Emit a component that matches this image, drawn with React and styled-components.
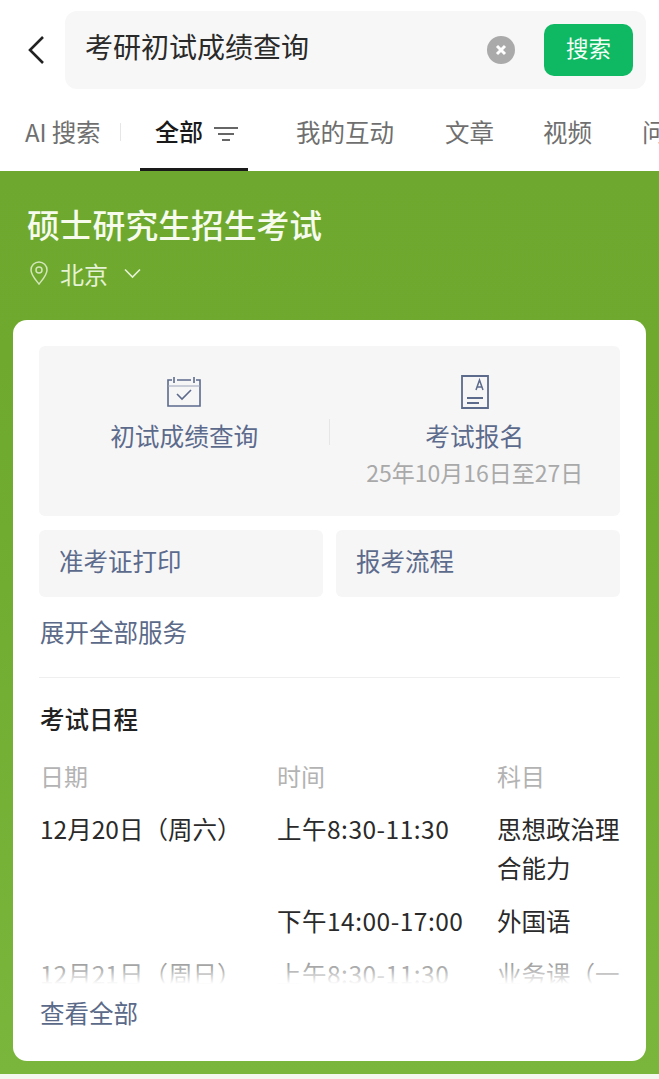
import React from "react";
import styled, { createGlobalStyle } from "styled-components";

const GlobalStyle = createGlobalStyle`
    html, body {
        margin: 0;
        padding: 0;
        background: #eef4ea;
        font-family: "Noto Sans CJK SC", "Noto Sans", sans-serif;
    }
    * {
        box-sizing: border-box;
    }
`

const Page = styled.div`
    width: 659px;
    height: 1079px;
    overflow: hidden;
    background: #f3f7f0;
`

const TopBar = styled.div`
    display: flex;
    align-items: center;
    height: 100px;
    background: #fff;
    padding: 0 13px 0 25px;
`

const BackIcon = styled.svg`
    width: 21px;
    height: 32px;
    margin-right: 19px;
    flex-shrink: 0;
`

const SearchBox = styled.div`
    flex: 1;
    height: 78px;
    border-radius: 12px;
    background: #f7f7f7;
    display: flex;
    align-items: center;
    padding: 0 13px 0 20px;
`

const Query = styled.div`
    flex: 1;
    font-size: 28px;
    color: #2a2a2a;
    padding-bottom: 9px;
`

const ClearIcon = styled.svg`
    width: 28px;
    height: 28px;
    margin-right: 29px;
`

const SearchButton = styled.div`
    width: 89px;
    height: 52px;
    border-radius: 10px;
    background: #0fb963;
    color: #f4fff8;
    font-size: 22.5px;
    padding-bottom: 6px;
    display: flex;
    align-items: center;
    justify-content: center;
`

const Tabs = styled.div`
    display: flex;
    height: 71px;
    background: #fff;
    overflow: hidden;
    padding-left: 25px;
    white-space: nowrap;
`

const Tab = styled.div`
    flex-shrink: 0;
    height: 71px;
    display: flex;
    align-items: center;
    padding-bottom: 8px;
    font-size: 24.5px;
    width: ${p => p.$w}px;
    color: #6f6f6f;
`

const AiLabel = styled.span`
    margin-right: 5px;
    font-size: 24px;
`

const Divider = styled.div`
    width: 1px;
    height: 18px;
    background: #e6e6e6;
    margin: -8px 19px 0 20px;
    align-self: center;
    flex-shrink: 0;
`

const ActiveTab = styled.div`
    flex-shrink: 0;
    width: 108px;
    height: 71px;
    margin-right: 48px;
    display: flex;
    align-items: center;
    padding: 0 0 8px 15px;
    font-size: 24px;
    font-weight: 500;
    color: #1a1a1a;
    border-bottom: 3px solid #1a1a1a;
    gap: 11px;
`

const FilterIcon = styled.svg`
    width: 24px;
    height: 16px;
    margin-top: 8px;
`

const Hero = styled.div`
    height: 903px;
    background: linear-gradient(180deg, #6ea82e 0%, #70ac30 40%, #7ab63b 100%);
    padding: 31px 13px 0;
`

const Title = styled.div`
    font-size: 32.8px;
    line-height: 44px;
    color: #f6fbee;
    font-weight: 500;
    padding-left: 14px;
`

const Location = styled.div`
    display: flex;
    align-items: center;
    height: 40px;
    margin: 7px 0 27px;
    padding-left: 17px;
    font-size: 24px;
    color: #e6f2d6;
`

const PinIcon = styled.svg`
    width: 18px;
    height: 24px;
    margin-right: 12px;
`

const ChevronIcon = styled.svg`
    width: 17px;
    height: 11px;
    margin-left: 16px;
`

const Card = styled.div`
    height: 741px;
    background: #fff;
    border-radius: 14px;
    padding: 26px 26px 0;
`

const ServicePanel = styled.div`
    height: 170px;
    border-radius: 6px;
    background: #f6f6f7;
    display: grid;
    grid-template-columns: 1fr 1fr;
    position: relative;
`

const ServiceItem = styled.div`
    display: flex;
    flex-direction: column;
    align-items: center;
    padding-top: 29px;
`

const ServiceSep = styled.div`
    position: absolute;
    left: 290px;
    top: 73px;
    width: 1px;
    height: 26px;
    background: #e6e6e8;
`

const ServiceIcon = styled.svg`
    width: 36px;
    height: 36px;
`

const ServiceName = styled.div`
    margin-top: 7px;
    font-size: 24.7px;
    line-height: 34px;
    color: #5c6a8c;
`

const ServiceNote = styled.div`
    margin-top: 2px;
    font-size: 23px;
    line-height: 36px;
    color: #a9a9a9;
`

const SmallServices = styled.div`
    display: grid;
    grid-template-columns: 1fr 1fr;
    gap: 13px;
    margin-top: 14px;
`

const SmallService = styled.div`
    height: 67px;
    border-radius: 6px;
    background: #f6f6f7;
    display: flex;
    align-items: center;
    padding: 0 0 7px 20px;
    font-size: 24.5px;
    color: #5c6a8c;
`

const MoreLink = styled.div`
    font-size: 24.5px;
    line-height: 36px;
    color: #5b6a88;
    padding-left: 1px;
    margin-top: ${p => p.$top}px;
`

const Rule = styled.div`
    height: 1px;
    background: #efefef;
    margin-top: 27px;
`

const SectionTitle = styled.div`
    font-size: 24.5px;
    line-height: 36px;
    font-weight: 500;
    color: #222;
    padding-left: 1px;
    margin-top: 23px;
`

const ScheduleWrap = styled.div`
    position: relative;
    height: 225px;
    margin-top: 22px;
    overflow: hidden;
    &::after {
        content: "";
        position: absolute;
        left: 0;
        right: 0;
        bottom: 0;
        height: 34px;
        background: linear-gradient(180deg, rgba(255,255,255,0.35) 0%, rgba(255,255,255,0.65) 60%, #fff 100%);
    }
`

const Schedule = styled.div`
    display: grid;
    grid-template-columns: 237px 220px 128px;
    padding-left: 1px;
    font-size: 24.5px;
    line-height: 39px;
    color: #2a2a2a;
`

const HeadCell = styled.div`
    color: #b3b3b3;
    height: 34px;
    line-height: 34px;
    margin-bottom: 16px;
    font-size: 24px;
`

const Cell = styled.div`
    margin-bottom: 14px;
    letter-spacing: ${p => p.$spacing || 0}px;
    white-space: ${p => (p.$wrap ? "normal" : "nowrap")};
`

const schedule = [
    { date: "12月20日（周六）", time: "上午8:30-11:30", subject: "思想政治理合能力", wrap: true },
    { date: "", time: "下午14:00-17:00", subject: "外国语" },
    { date: "12月21日（周日）", time: "上午8:30-11:30", subject: "业务课（一" },
]

const App = () => {
    return (
        <Page>
            <GlobalStyle />
            <TopBar>
                <BackIcon viewBox="0 0 21 32" fill="none" stroke="#222" strokeWidth="2.6">
                    <path d="M18 3 L5 16 L18 29" />
                </BackIcon>
                <SearchBox>
                    <Query>考研初试成绩查询</Query>
                    <ClearIcon viewBox="0 0 28 28">
                        <circle cx="14" cy="14" r="14" fill="#aaa" />
                        <path d="M10 10 L18 18 M18 10 L10 18" stroke="#fff" strokeWidth="3" />
                    </ClearIcon>
                    <SearchButton>搜索</SearchButton>
                </SearchBox>
            </TopBar>
            <Tabs>
                <Tab $w={75}><AiLabel>AI</AiLabel>搜索</Tab>
                <Divider />
                <ActiveTab>
                    全部
                    <FilterIcon viewBox="0 0 24 16" stroke="#666" strokeWidth="2">
                        <path d="M0 2 H24 M4 8 H20 M8 14 H16" />
                    </FilterIcon>
                </ActiveTab>
                <Tab $w={149}>我的互动</Tab>
                <Tab $w={98}>文章</Tab>
                <Tab $w={99}>视频</Tab>
                <Tab $w={40}>问题</Tab>
            </Tabs>
            <Hero>
                <Title>硕士研究生招生考试</Title>
                <Location>
                    <PinIcon viewBox="0 0 18 24" fill="none" stroke="#d3e6ba" strokeWidth="1.5">
                        <path d="M9 23 C5 18 1 14 1 9 A8 8 0 0 1 17 9 C17 14 13 18 9 23 Z" />
                        <circle cx="9" cy="9" r="3" />
                    </PinIcon>
                    北京
                    <ChevronIcon viewBox="0 0 17 11" fill="none" stroke="#e6f2d6" strokeWidth="1.6">
                        <path d="M1 1.5 L8.5 9 L16 1.5" />
                    </ChevronIcon>
                </Location>
                <Card>
                    <ServicePanel>
                        <ServiceItem>
                            <ServiceIcon viewBox="0 0 36 36" fill="none" stroke="#5c6a8c" strokeWidth="1.6">
                                <path d="M6 5 H2 V31 H34 V5 H30 M11 5 H25" />
                                <path d="M8 2 V8 M28 2 V8" />
                                <path d="M2 11 H34" stroke="#9aa4ba" strokeWidth="1" />
                                <path d="M11 19 L16 24 L25 15" />
                            </ServiceIcon>
                            <ServiceName>初试成绩查询</ServiceName>
                        </ServiceItem>
                        <ServiceSep />
                        <ServiceItem>
                            <ServiceIcon viewBox="0 0 36 36" fill="none" stroke="#5c6a8c" strokeWidth="1.8">
                                <path d="M5 1 H31 V33 H5 Z" />
                                <path d="M10 23 H26 M10 28 H22" />
                                <path d="M19 15 L22.5 5 L26 15 M20 12 H25" strokeWidth="1.5" />
                            </ServiceIcon>
                            <ServiceName>考试报名</ServiceName>
                            <ServiceNote>25年10月16日至27日</ServiceNote>
                        </ServiceItem>
                    </ServicePanel>
                    <SmallServices>
                        <SmallService>准考证打印</SmallService>
                        <SmallService>报考流程</SmallService>
                    </SmallServices>
                    <MoreLink $top={17}>展开全部服务</MoreLink>
                    <Rule />
                    <SectionTitle>考试日程</SectionTitle>
                    <ScheduleWrap>
                        <Schedule>
                            <HeadCell>日期</HeadCell>
                            <HeadCell>时间</HeadCell>
                            <HeadCell>科目</HeadCell>
                            {schedule.map((row) => (
                                <React.Fragment key={row.time + row.subject}>
                                    <Cell>{row.date}</Cell>
                                    <Cell $spacing={0.5}>{row.time}</Cell>
                                    <Cell $wrap={row.wrap}>{row.subject}</Cell>
                                </React.Fragment>
                            ))}
                        </Schedule>
                    </ScheduleWrap>
                    <MoreLink $top={11}>查看全部</MoreLink>
                </Card>
            </Hero>
        </Page>
    )
}

export default App;
